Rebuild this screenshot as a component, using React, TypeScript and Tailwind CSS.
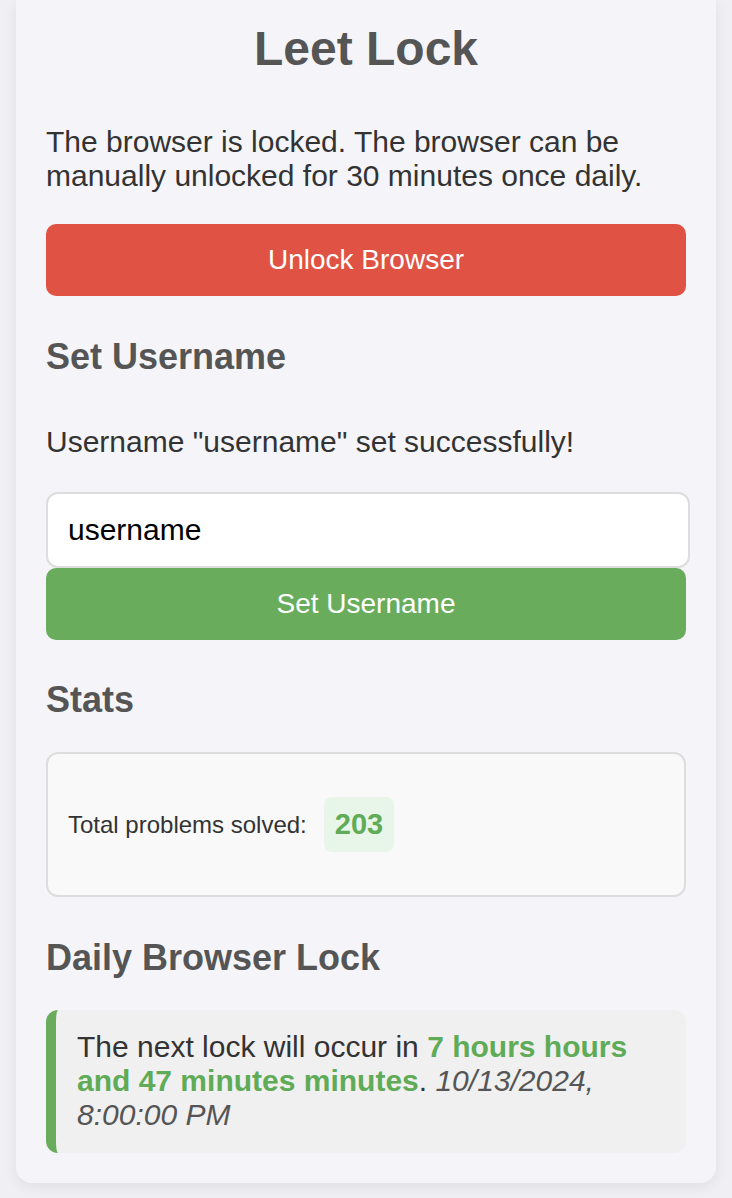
import React from "react";

const font = { fontFamily: '"Liberation Sans", Arial, Helvetica, sans-serif' };

function SectionTitle({ children }: { children: React.ReactNode }) {
  return (
    <h2 className="text-[36px] leading-[42px] font-bold text-[#555555]">{children}</h2>
  );
}

export default function App() {
  return (
    <div className="min-h-[1198px] bg-[#f0f0f4] px-4 pb-4" style={font}>
      <div className="rounded-b-[16px] bg-[#f5f5f9] px-[30px] pt-[21px] pb-[30px] shadow-[0_4px_14px_rgba(0,0,0,0.07)]">
        <h1 className="text-center text-[48px] leading-[55px] font-bold text-[#555555]">
          Leet Lock
        </h1>

        <p className="mt-[49px] text-[30px] leading-[34px] text-[#333333]">
          The browser is locked. The browser can be manually unlocked for 30 minutes once daily.
        </p>

        <button className="mt-[31px] h-[72px] w-full rounded-[10px] bg-[#e05243] text-[28px] text-white">
          Unlock Browser
        </button>

        <div className="mt-[40px]">
          <SectionTitle>Set Username</SectionTitle>
        </div>

        <p className="mt-[47px] text-[30px] leading-[34px] text-[#333333]">
          Username "username" set successfully!
        </p>

        <input
          readOnly
          value="username"
          className="mt-[33px] box-border block h-[76px] w-[calc(100%+4px)] rounded-[12px] border-2 border-[#dddddd] bg-white px-[20px] text-[30px] text-black outline-none"
          style={font}
        />
        <button className="block h-[72px] w-full rounded-[10px] bg-[#69ad5c] text-[28px] text-white">
          Set Username
        </button>

        <div className="mt-[39px]">
          <SectionTitle>Stats</SectionTitle>
        </div>

        <div className="mt-[31px] flex h-[145px] items-center rounded-[12px] border-2 border-[#dddddd] bg-[#f9f9f9] px-[20px]">
          <span className="text-[24px] text-[#333333]">Total problems solved:</span>
          <span className="ml-[17px] flex h-[55px] items-center rounded-[8px] bg-[#e8f5e9] px-[11px] text-[29px] font-bold text-[#5fab57]">
            203
          </span>
        </div>

        <div className="mt-[40px]">
          <SectionTitle>Daily Browser Lock</SectionTitle>
        </div>

        <div className="mt-[31px] rounded-[12px] border-l-[10px] border-[#69ad5c] bg-[#f0f0f0] pt-[20px] pb-[21px] pr-[20px] pl-[21px]">
          <p className="text-[30px] leading-[34px] text-[#333333]">
            The next lock will occur in{" "}
            <span className="font-bold text-[#5fab57]">7 hours hours and 47 minutes minutes</span>.{" "}
            <span className="italic text-[#555555]">10/13/2024, 8:00:00 PM</span>
          </p>
        </div>
      </div>
    </div>
  );
}
